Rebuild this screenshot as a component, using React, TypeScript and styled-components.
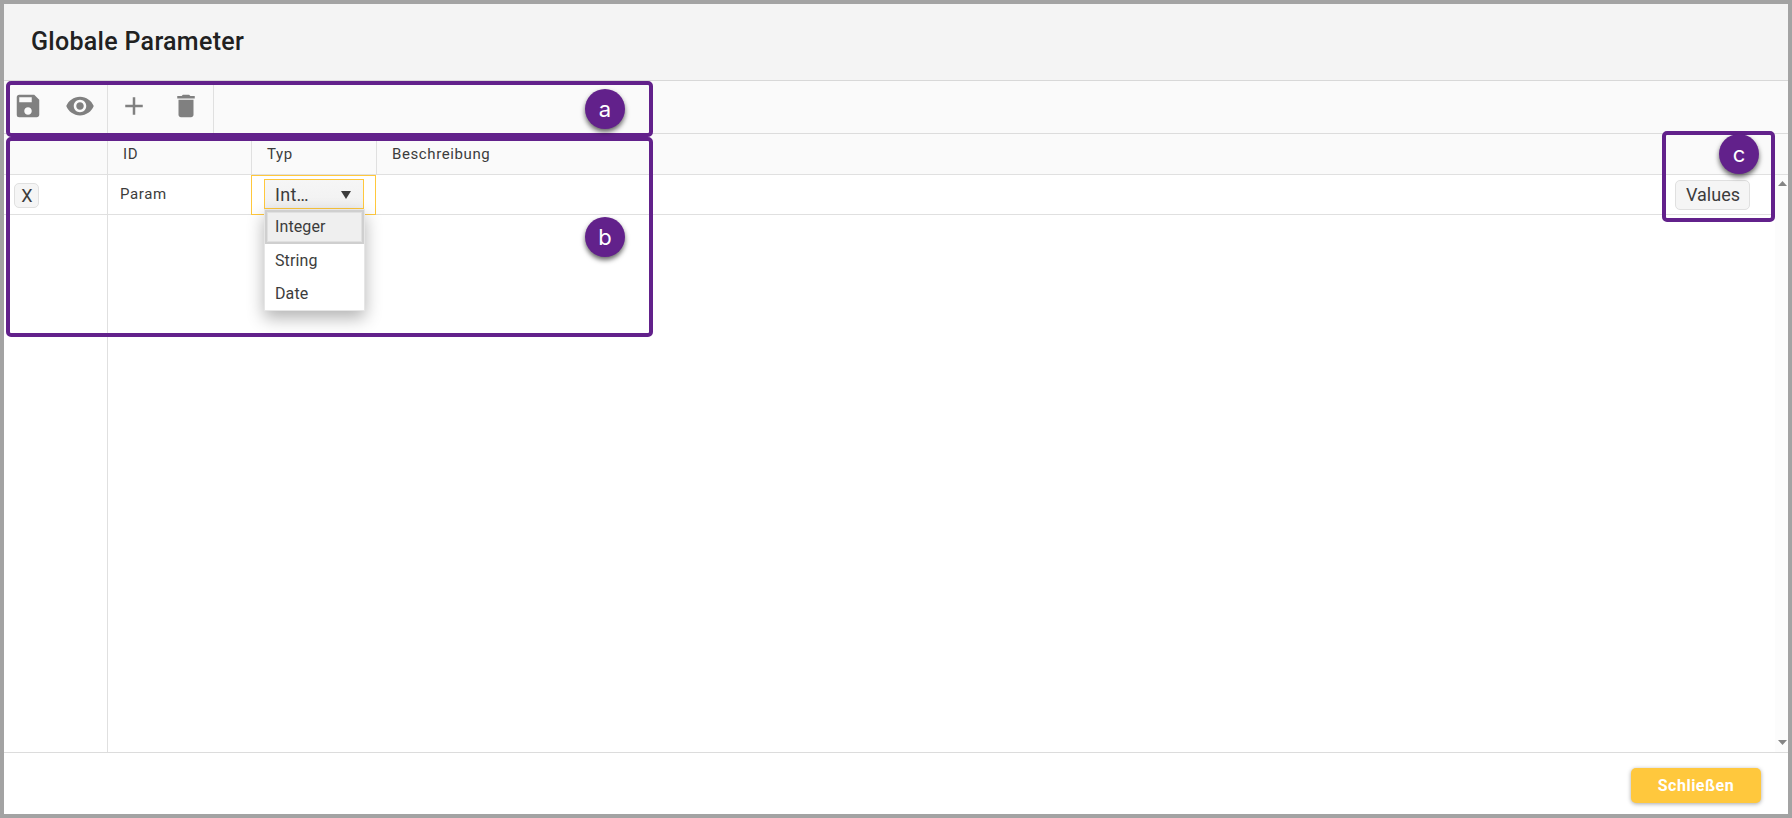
import React, { useState } from 'react'
import styled, { createGlobalStyle, css } from 'styled-components'
import { MdAdd, MdDelete, MdSave, MdVisibility } from 'react-icons/md'

const GlobalStyle = createGlobalStyle`
  * {
    box-sizing: border-box;
  }

  body {
    margin: 0;
    background: #fff;
    color: #3c3c3c;
    font-family: Roboto, sans-serif;
  }
`

const line = '#e0e0e0'
const accent = '#ffc83d'
const purple = '#62218b'

const Dialog = styled.div`
  position: relative;
  display: flex;
  flex-direction: column;
  width: 100%;
  height: 100vh;
  border: 4px solid #a3a3a3;
  background: #fff;
`

const Header = styled.header`
  display: flex;
  align-items: center;
  height: 77px;
  padding: 0 27px 1px;
  border-bottom: 1px solid #d8d8d8;
  background: #f4f4f4;
`

const Title = styled.h1`
  margin: 0;
  color: #212121;
  font-size: 25px;
  font-weight: 500;
  letter-spacing: 0.3px;
`

const Toolbar = styled.div`
  display: flex;
  height: 53px;
  border-bottom: 1px solid #dcdcdc;
  background: #fafafa;
`

const ToolGroup = styled.div<{ $width: number; $start: number }>`
  display: flex;
  gap: 22px;
  width: ${({ $width }) => $width}px;
  padding: 10px 0 0 ${({ $start }) => $start}px;
  border-right: 1px solid ${line};
`

const ToolButton = styled.button`
  width: 30px;
  height: 30px;
  padding: 0;
  border: 0;
  background: transparent;
  color: #808080;
  cursor: pointer;

  & > svg {
    display: block;
    width: 30px;
    height: 30px;
  }
`

const Grid = styled.div`
  display: flex;
  flex: 1;
  flex-direction: column;
`

const GridHead = styled.div`
  display: flex;
  height: 41px;
  border-bottom: 1px solid ${line};
  background: #fafafa;
`

const HeadCell = styled.div<{ $width?: number }>`
  width: ${({ $width }) => ($width ? `${$width}px` : 'auto')};
  padding: 11px 0 0 15px;
  border-right: ${({ $width }) => ($width ? `1px solid ${line}` : '0')};
  font-size: 15px;
  line-height: 18px;
  letter-spacing: 0.6px;
`

const GridBody = styled.div`
  display: flex;
  flex: 1;
`

const Rows = styled.div`
  display: flex;
  flex: 1;
  flex-direction: column;
`

const Row = styled.div`
  display: flex;
  height: 40px;
  border-bottom: 1px solid ${line};
`

const RowMark = styled.div`
  width: 104px;
  padding: 8px 0 0 10px;
  border-right: 1px solid ${line};
`

const EmptyRows = styled.div`
  flex: 1;
  width: 104px;
  border-right: 1px solid ${line};
`

const IdCell = styled.div`
  width: 143px;
  padding: 10px 0 0 12px;
  font-size: 15px;
  line-height: 18px;
  letter-spacing: 0.6px;
`

const TypeCell = styled.div`
  position: relative;
  width: 125px;
  height: 40px;
  padding: 3px 0 0 12px;
  border: 1px solid ${accent};
`

const ValueCell = styled.div`
  flex: 1;
  display: flex;
  justify-content: flex-end;
  align-items: flex-start;
  padding: 5px 25px 0 0;
`

const SmallButton = styled.button<{ $width: number; $height: number }>`
  width: ${({ $width }) => $width}px;
  height: ${({ $height }) => $height}px;
  padding: 0 0 0 1px;
  border: 1px solid ${line};
  border-radius: 5px;
  background: #f5f5f5;
  color: #3c3c3c;
  font-family: inherit;
  font-size: 18px;
  line-height: 20px;
  cursor: pointer;
`

const Select = styled.button`
  display: flex;
  align-items: center;
  justify-content: space-between;
  width: 100px;
  height: 30px;
  padding: 1px 12px 0 10px;
  border: 1px solid ${accent};
  background: linear-gradient(#f6f6f6, #f1f1f1);
  color: #3c3c3c;
  font-family: inherit;
  font-size: 18px;
  letter-spacing: 0.3px;
  cursor: pointer;
`

const Caret = styled.svg`
  width: 10px;
  height: 8px;
  fill: #3c3c3c;
`

const Menu = styled.ul`
  position: absolute;
  z-index: 1;
  top: 33px;
  left: 12px;
  width: 101px;
  margin: 0;
  padding: 0;
  border: 1px solid #e6e6e6;
  background: #fff;
  box-shadow: 0 7px 16px rgba(0, 0, 0, 0.3);
  list-style: none;
`

const MenuItem = styled.li<{ $active: boolean }>`
  height: 33px;
  padding: 0 10px;
  font-size: 16px;
  line-height: 34px;
  letter-spacing: 0.1px;

  ${({ $active }) =>
    $active &&
    css`
      height: 34px;
      padding: 0 8px;
      border: 2px solid #cfcfcf;
      background: #efefef;
      box-shadow: inset 0 0 0 1px #e0e0e0;
      line-height: 30px;
    `}
`

const ScrollBar = styled.div`
  display: flex;
  flex-direction: column;
  justify-content: space-between;
  align-items: flex-end;
  width: 13px;
  padding: 6px 1px 7px 0;
  background: #fcfcfc;
`

const ScrollArrow = styled.svg`
  width: 9px;
  height: 5px;
  fill: #858585;
`

const Footer = styled.footer`
  display: flex;
  justify-content: flex-end;
  height: 62px;
  padding: 15px 27px 0;
  border-top: 1px solid #dcdcdc;
`

const CloseButton = styled.button`
  width: 130px;
  height: 35px;
  padding: 0;
  border: 0;
  border-radius: 5px;
  background: ${accent};
  box-shadow: 0 1px 4px rgba(0, 0, 0, 0.35);
  color: #fff;
  font-family: inherit;
  font-size: 16px;
  font-weight: 700;
  letter-spacing: 0.5px;
  cursor: pointer;
`

// callouts lie over the dialog, measured from its inner edge
const Callout = styled.div<{ $x: number; $y: number; $width: number; $height: number }>`
  position: absolute;
  top: ${({ $y }) => $y}px;
  left: ${({ $x }) => $x}px;
  width: ${({ $width }) => $width}px;
  height: ${({ $height }) => $height}px;
  border: 4px solid ${purple};
  border-radius: 5px;
  pointer-events: none;
`

const Badge = styled.span<{ $top: number; $right: number }>`
  position: absolute;
  top: ${({ $top }) => $top}px;
  right: ${({ $right }) => $right}px;
  width: 40px;
  height: 40px;
  border-radius: 50%;
  background: ${purple};
  box-shadow: 0 3px 5px rgba(0, 0, 0, 0.6);
  color: #fff;
  font-family: Inter, sans-serif;
  font-size: 22px;
  line-height: 41px;
  text-align: center;
`

const types = ['Integer', 'String', 'Date']

const App: React.FC = () => {
  const [isOpen, setIsOpen] = useState(true)
  const [selected, setSelected] = useState('Integer')

  const handleSelect = (type: string) => {
    setSelected(type)
    setIsOpen(false)
  }

  return (
    <>
      <GlobalStyle />
      <Dialog>
        <Header>
          <Title>Globale Parameter</Title>
        </Header>

        <Toolbar>
          <ToolGroup $width={104} $start={9}>
            <ToolButton><MdSave /></ToolButton>
            <ToolButton><MdVisibility /></ToolButton>
          </ToolGroup>
          <ToolGroup $width={106} $start={11}>
            <ToolButton><MdAdd /></ToolButton>
            <ToolButton><MdDelete /></ToolButton>
          </ToolGroup>
        </Toolbar>

        <Grid>
          <GridHead>
            <HeadCell $width={104} />
            <HeadCell $width={144}>ID</HeadCell>
            <HeadCell $width={125}>Typ</HeadCell>
            <HeadCell>Beschreibung</HeadCell>
          </GridHead>
          <GridBody>
            <Rows>
              <Row>
                <RowMark>
                  <SmallButton $width={25} $height={25}>X</SmallButton>
                </RowMark>
                <IdCell>Param</IdCell>
                <TypeCell>
                  <Select onClick={() => setIsOpen(!isOpen)}>
                    {`${selected.slice(0, 3)}…`}
                    <Caret viewBox="0 0 10 8">
                      <path d="M0 0H10L5 8Z" />
                    </Caret>
                  </Select>
                  {isOpen && (
                    <Menu>
                      {types.map((type) => (
                        <MenuItem key={type} $active={type === selected} onClick={() => handleSelect(type)}>
                          {type}
                        </MenuItem>
                      ))}
                    </Menu>
                  )}
                </TypeCell>
                <ValueCell>
                  <SmallButton $width={75} $height={30}>Values</SmallButton>
                </ValueCell>
              </Row>
              <EmptyRows />
            </Rows>
            <ScrollBar>
              <ScrollArrow viewBox="0 0 9 5">
                <path d="M0 5L4.5 0L9 5Z" />
              </ScrollArrow>
              <ScrollArrow viewBox="0 0 9 5">
                <path d="M0 0H9L4.5 5Z" />
              </ScrollArrow>
            </ScrollBar>
          </GridBody>
        </Grid>

        <Footer>
          <CloseButton>Schließen</CloseButton>
        </Footer>

        <Callout $x={2} $y={77} $width={647} $height={56}>
          <Badge $top={4} $right={24}>a</Badge>
        </Callout>
        <Callout $x={2} $y={133} $width={647} $height={200}>
          <Badge $top={76} $right={24}>b</Badge>
        </Callout>
        <Callout $x={1658} $y={127} $width={113} $height={91}>
          <Badge $top={-1} $right={12}>c</Badge>
        </Callout>
      </Dialog>
    </>
  )
}

export default App
